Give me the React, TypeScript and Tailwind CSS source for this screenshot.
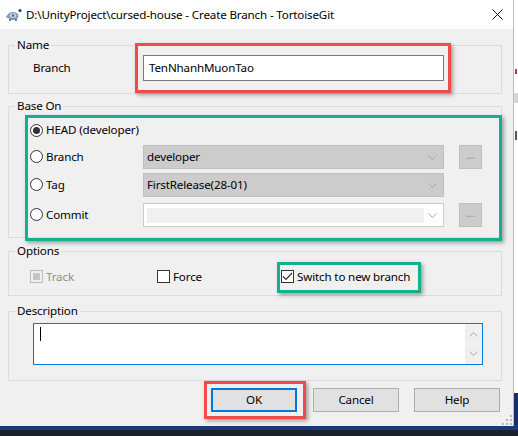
import * as React from 'react';

const Chevron = ({ up = false }: { up?: boolean }) => (
  <svg width="9" height="5" viewBox="0 0 9 5" className="block">
    <path
      d={up ? 'M0.5 4.5 L4.5 0.5 L8.5 4.5' : 'M0.5 0.5 L4.5 4.5 L8.5 0.5'}
      fill="none"
      stroke="#a8a8a8"
      strokeWidth="1"
    />
  </svg>
);

const Radio = ({ checked = false }: { checked?: boolean }) => (
  <span className="flex h-[13px] w-[13px] shrink-0 items-center justify-center rounded-full border border-[#333333] bg-white">
    {checked && <span className="h-[7px] w-[7px] rounded-full bg-[#333333]" />}
  </span>
);

const Group = ({
  title,
  className = '',
  children,
}: {
  title: string;
  className?: string;
  children: React.ReactNode;
}) => (
  <fieldset className={`ml-[8px] w-[494px] border border-[#dcdcdc] pl-[6px] ${className}`}>
    <legend className="px-[2px] leading-[16px]">{title}</legend>
    {children}
  </fieldset>
);

const DotsButton = () => (
  <div className="ml-[15px] flex h-[24px] w-[23px] items-center justify-center border border-[#bfbfbf] bg-[#cccccc] pb-[4px] text-[#8a8a8a]">
    ...
  </div>
);

const Combo = ({ value }: { value: string }) => (
  <div className="flex h-[24px] w-[301px] items-center border border-[#bfbfbf] bg-[#cccccc] pl-[3px] pr-[6px]">
    <span className="flex-1">{value}</span>
    <Chevron />
  </div>
);

const TurtleIcon = () => (
  <svg width="16" height="14" viewBox="0 0 16 14">
    <ellipse cx="7" cy="8" rx="5.5" ry="4" fill="#7f93ad" />
    <ellipse cx="7" cy="7.5" rx="3.5" ry="2.5" fill="#c5d0de" />
    <circle cx="7" cy="7.5" r="1.3" fill="#56708f" />
    <circle cx="1.8" cy="8.5" r="1.6" fill="#8a9bb1" />
    <rect x="3" y="11" width="2" height="2" fill="#6d819c" />
    <rect x="9" y="11" width="2" height="2" fill="#6d819c" />
    <circle cx="14" cy="2.5" r="1.6" fill="#1f3f8f" />
  </svg>
);

const Grip = () => (
  <svg width="10" height="10" viewBox="0 0 10 10">
    {[
      [8, 0],
      [4, 4],
      [8, 4],
      [0, 8],
      [4, 8],
      [8, 8],
    ].map(([x, y]) => (
      <rect key={`${x}-${y}`} x={x} y={y} width="2" height="2" fill="#b8b8b8" />
    ))}
  </svg>
);

export default function App() {
  return (
    <div className="relative flex h-[436px] w-[518px] flex-col overflow-hidden bg-white font-['Noto_Sans',sans-serif] text-[11.6px] tracking-[-0.15px] text-black">
      <div className="flex h-[426px]">
        <div className="flex w-[514px] flex-col border-r border-[#bdbdbd]">
          {/* title bar */}
          <div className="flex h-[29px] shrink-0 items-center bg-white">
            <div className="ml-[6px]">
              <TurtleIcon />
            </div>
            <span className="ml-[4px] whitespace-nowrap">
              {'D:\\UnityProject\\cursed-house - Create Branch - TortoiseGit'}
            </span>
            <svg width="11" height="11" viewBox="0 0 11 11" className="ml-auto mr-[10px]">
              <path d="M0.5 0.5 L10.5 10.5 M10.5 0.5 L0.5 10.5" stroke="#111" strokeWidth="1" />
            </svg>
          </div>

          {/* body */}
          <div className="flex flex-1 flex-col bg-[#f0f0f0]">
            <Group title="Name" className="mt-[8px] pb-[12px]">
              <div className="mt-[2px] flex h-[26px] items-center">
                <span className="ml-[18px] w-[110px]">Branch</span>
                <div className="flex h-[26px] w-[301px] items-center border border-[#7a7a7a] bg-white pl-[5px]">
                  TenNhanhMuonTao
                </div>
              </div>
            </Group>

            <Group title="Base On" className="mt-[4px] pb-[10px]">
              <div className="ml-[15px] mt-[4px] flex h-[24px] items-center">
                <Radio checked />
                <span className="ml-[3px]">HEAD (developer)</span>
              </div>
              <div className="ml-[15px] mt-[3px] flex h-[24px] items-center">
                <div className="flex w-[113px] items-center">
                  <Radio />
                  <span className="ml-[3px]">Branch</span>
                </div>
                <Combo value="developer" />
                <DotsButton />
              </div>
              <div className="ml-[15px] mt-[4px] flex h-[24px] items-center">
                <div className="flex w-[113px] items-center">
                  <Radio />
                  <span className="ml-[3px]">Tag</span>
                </div>
                <Combo value="FirstRelease(28-01)" />
              </div>
              <div className="ml-[15px] mt-[6px] flex h-[24px] items-center">
                <div className="flex w-[113px] items-center">
                  <Radio />
                  <span className="ml-[3px]">Commit</span>
                </div>
                <div className="flex h-[24px] w-[301px] items-center border border-[#cccccc] bg-white pl-[3px] pr-[6px]">
                  <div className="h-[15px] w-[277px] bg-[#f0f0f0]" />
                  <span className="ml-auto">
                    <Chevron />
                  </span>
                </div>
                <DotsButton />
              </div>
            </Group>

            <Group title="Options" className="mt-[5px] pb-[8px]">
              <div className="ml-[15px] mt-[8px] flex h-[20px] items-center">
                <div className="flex w-[127px] items-center">
                  <span className="flex h-[13px] w-[13px] items-center justify-center border border-[#bcbcbc] bg-[#f0f0f0]">
                    <span className="h-[7px] w-[7px] bg-[#c4c4c4]" />
                  </span>
                  <span className="ml-[3px] text-[#8f8f8f]">Track</span>
                </div>
                <div className="flex w-[124px] items-center">
                  <span className="h-[13px] w-[13px] border border-[#333333] bg-white" />
                  <span className="ml-[3px]">Force</span>
                </div>
                <div className="flex items-center">
                  <span className="flex h-[13px] w-[13px] items-center justify-center border border-[#333333] bg-white">
                    <svg width="11" height="9" viewBox="0 0 11 9">
                      <path d="M1 4.5 L4 7.5 L10 1" fill="none" stroke="#333" strokeWidth="1.2" />
                    </svg>
                  </span>
                  <span className="ml-[3px]">Switch to new branch</span>
                </div>
              </div>
            </Group>

            <Group title="Description" className="mt-[7px] pb-[15px]">
              <div className="ml-[18px] mt-[4px] flex h-[42px] w-[450px] border border-[#0078d7] bg-white">
                <div className="ml-[6px] mt-[3px] h-[14px] w-[1px] bg-black" />
                <div className="ml-auto flex w-[17px] flex-col items-center justify-between bg-[#f0f0f0] py-[8px]">
                  <Chevron up />
                  <Chevron />
                </div>
              </div>
            </Group>

            <div className="mt-[7px] flex justify-end gap-[15px] pr-[13px]">
              <button className="mr-[1px] flex h-[24px] w-[86px] items-center justify-center border-2 border-[#0078d7] bg-[#e1e1e1]">
                OK
              </button>
              <button className="flex h-[24px] w-[86px] items-center justify-center border border-[#adadad] bg-[#e1e1e1]">
                Cancel
              </button>
              <button className="flex h-[24px] w-[86px] items-center justify-center border border-[#adadad] bg-[#e1e1e1]">
                Help
              </button>
            </div>

            <div className="mt-[3px] flex justify-end pr-[1px]">
              <Grip />
            </div>
          </div>
        </div>

        {/* sliver of the window behind */}
        <div className="flex flex-1 flex-col bg-white">
          <div className="mt-[69px] ml-[1px] h-[5px] w-[2px] bg-[#b0306a]" />
          <div className="mt-[19px] h-[10px] bg-[#d8d8d8]" />
          <div className="mt-[28px] ml-[1px] h-[9px] w-[2px] bg-[#555]" />
          <div className="mt-auto h-[33px] bg-[#15306a]" />
        </div>
      </div>
      <div className="h-[4px] bg-[#17397b]" />
      <div className="flex-1 bg-[#1c212b]" />

      {/* annotation highlights */}
      <div className="pointer-events-none absolute left-[135px] top-[43px] h-[50px] w-[316px] border-[3px] border-[#f04a4a] shadow-[2px_2px_4px_rgba(0,0,0,0.35)]" />
      <div className="pointer-events-none absolute left-[25px] top-[115px] h-[126px] w-[477px] border-[3px] border-[#12b08c] shadow-[2px_2px_4px_rgba(0,0,0,0.35)]" />
      <div className="pointer-events-none absolute left-[277px] top-[262px] h-[31px] w-[144px] border-[3px] border-[#12b08c] shadow-[2px_2px_4px_rgba(0,0,0,0.35)]" />
      <div className="pointer-events-none absolute left-[204px] top-[381px] h-[38px] w-[102px] border-[3px] border-[#f04a4a] shadow-[2px_2px_4px_rgba(0,0,0,0.35)]" />
    </div>
  );
}
